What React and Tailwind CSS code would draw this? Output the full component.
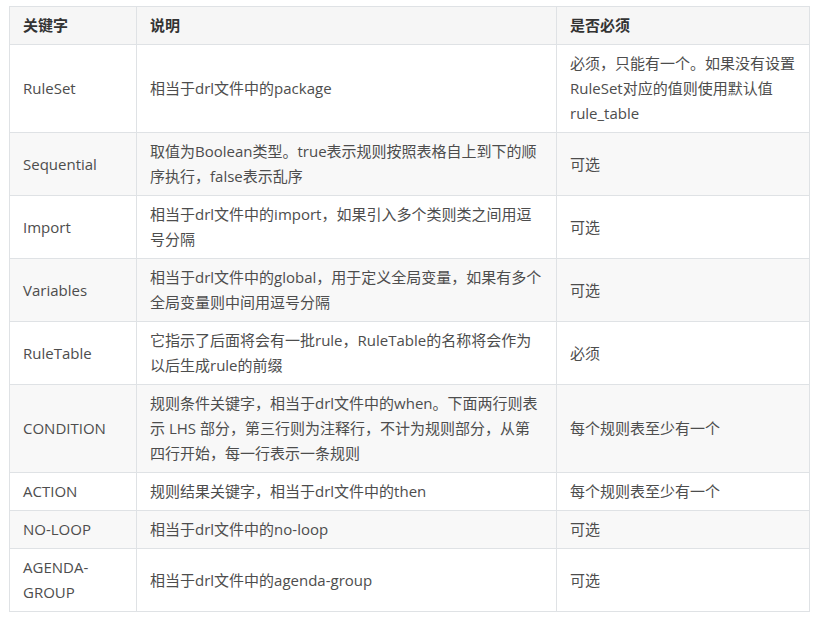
export default function App() {
  const rows = [
    ["RuleSet", "相当于drl文件中的package", "必须，只能有一个。如果没有设置RuleSet对应的值则使用默认值rule_table"],
    ["Sequential", "取值为Boolean类型。true表示规则按照表格自上到下的顺序执行，false表示乱序", "可选"],
    ["Import", "相当于drl文件中的import，如果引入多个类则类之间用逗号分隔", "可选"],
    ["Variables", "相当于drl文件中的global，用于定义全局变量，如果有多个全局变量则中间用逗号分隔", "可选"],
    ["RuleTable", "它指示了后面将会有一批rule，RuleTable的名称将会作为以后生成rule的前缀", "必须"],
    ["CONDITION", "规则条件关键字，相当于drl文件中的when。下面两行则表示 LHS 部分，第三行则为注释行，不计为规则部分，从第四行开始，每一行表示一条规则", "每个规则表至少有一个"],
    ["ACTION", "规则结果关键字，相当于drl文件中的then", "每个规则表至少有一个"],
    ["NO-LOOP", "相当于drl文件中的no-loop", "可选"],
    ["AGENDA-GROUP", "相当于drl文件中的agenda-group", "可选"],
  ];
  const td = "border border-[#dfe2e5] px-[13px] py-[6px] align-middle";
  return (
    <div className="bg-white w-[822px] h-[619px] pt-[6px] pl-[9px]" style={{ fontFamily: '"Open Sans","Noto Sans CJK SC",sans-serif' }}>
      <table className="border-collapse text-[15px] leading-[25px] text-[#4d4d4d] table-fixed w-[800px]">
        <colgroup>
          <col className="w-[127px]" />
          <col className="w-[420px]" />
          <col className="w-[253px]" />
        </colgroup>
        <thead>
          <tr className="bg-[#f6f6f6] text-[#333]">
            <th className={td + " text-left font-bold h-[38px]"}>关键字</th>
            <th className={td + " text-left font-bold"}>说明</th>
            <th className={td + " text-left font-bold"}>是否必须</th>
          </tr>
        </thead>
        <tbody>
          {rows.map((r, i) => (
            <tr key={i} className={i % 2 === 1 ? "bg-[#f8f8f8]" : "bg-white"}>
              <td className={td}>{r[0]}</td>
              <td className={td}>{r[1]}</td>
              <td className={td}>{r[2]}</td>
            </tr>
          ))}
        </tbody>
      </table>
    </div>
  );
}
